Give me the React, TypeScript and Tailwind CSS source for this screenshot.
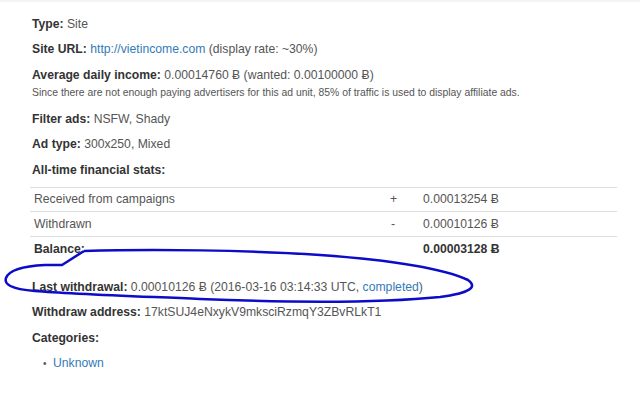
const label = "font-bold text-[#333]";

function Row({ children, className = "" }: { children: React.ReactNode; className?: string }) {
  return <p className={`leading-[17px] ${className}`}>{children}</p>;
}

function Scribble() {
  return (
    <svg className="pointer-events-none absolute left-0 top-0" width="640" height="394" viewBox="0 0 640 394" fill="none">
      <path
        d="M84 251 C 150 249, 250 250, 320 255 C 390 260, 442 268, 468 280 C 478 287, 470 293, 440 297 C 380 303, 300 303, 200 299 C 130 296, 70 294, 35 291 C 10 289, 4 284, 6 278 C 9 270, 25 266, 45 265 L 62 265 L 84 251"
        stroke="#0c0cc8"
        strokeWidth="2.5"
        strokeLinejoin="round"
      />
    </svg>
  );
}

export default function App() {
  return (
    <div className="relative h-[394px] w-[640px] overflow-hidden bg-white font-['Liberation_Sans',Arial,sans-serif] text-[12.2px] text-[#555]">
      <div className="h-[2px] bg-[#f4f4f4]" />
      <div className="px-8 pt-[14px]">
        <Row className="mb-[8px]">
          <span className={label}>Type:</span> Site
        </Row>
        <Row className="mb-[9px]">
          <span className={label}>Site URL:</span> <span className="text-[#337ab7]">http://vietincome.com</span> (display rate: ~30%)
        </Row>
        <Row>
          <span className={label}>Average daily income:</span> 0.00014760 Ƀ (wanted: 0.00100000 Ƀ)
        </Row>
        <p className="mb-[9px] text-[10.4px] leading-[18px]">
          Since there are not enough paying advertisers for this ad unit, 85% of traffic is used to display affiliate ads.
        </p>
        <Row className="mb-[8px]">
          <span className={label}>Filter ads:</span> NSFW, Shady
        </Row>
        <Row className="mb-[9px]">
          <span className={label}>Ad type:</span> 300x250, Mixed
        </Row>
        <Row className="mb-[8px]">
          <span className={label}>All-time financial stats:</span>
        </Row>
        <table className="-ml-[2px] w-[587px] border-collapse">
          <tbody>
            <tr className="h-[24px] border-t border-[#ddd]">
              <td className="pl-[4px]">Received from campaigns</td>
              <td className="w-[33px]">+</td>
              <td className="w-[194px]">0.00013254 Ƀ</td>
            </tr>
            <tr className="h-[25px] border-t border-[#ddd]">
              <td className="pl-[4px]">Withdrawn</td>
              <td className="pl-[1px]">-</td>
              <td>0.00010126 Ƀ</td>
            </tr>
            <tr className="h-[25px] border-t border-[#ddd] font-bold text-[#333]">
              <td className="pl-[4px]">Balance:</td>
              <td />
              <td>0.00003128 Ƀ</td>
            </tr>
          </tbody>
        </table>
        <Row className="mb-[8px] mt-[17px]">
          <span className={label}>Last withdrawal:</span> 0.00010126 Ƀ (2016-03-16 03:14:33 UTC, <span className="text-[#337ab7]">completed</span>)
        </Row>
        <Row className="mb-[9px]">
          <span className={label}>Withdraw address:</span> 17ktSUJ4eNxykV9mksciRzmqY3ZBvRLkT1
        </Row>
        <Row className="mb-[8px]">
          <span className={label}>Categories:</span>
        </Row>
        <div className="flex items-center leading-[17px]">
          <span className="ml-[11px] w-[10px] text-[10px] text-[#555]">•</span>
          <span className="text-[#337ab7]">Unknown</span>
        </div>
      </div>
      <Scribble />
    </div>
  );
}
